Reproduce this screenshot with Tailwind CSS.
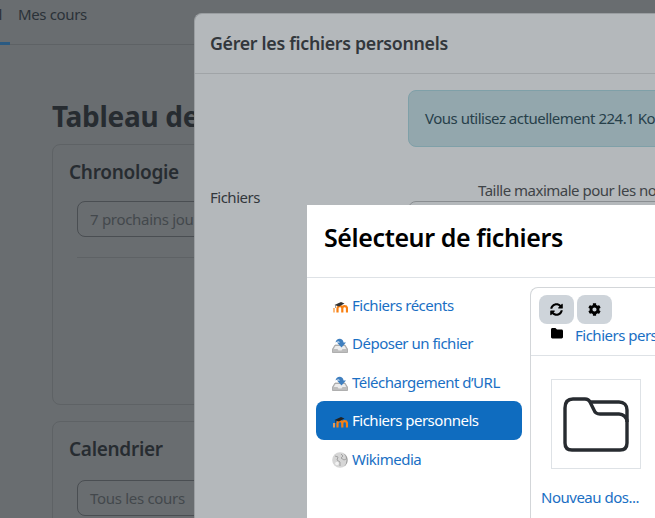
<!DOCTYPE html>
<html lang="fr">
<head>
<meta charset="UTF-8" />
<title>Gérer les fichiers personnels</title>
<script src="https://cdn.jsdelivr.net/npm/@tailwindcss/browser@4"></script>
</head>
<body class="relative h-[518px] w-[655px] overflow-hidden bg-[#696d70] font-['Noto_Sans',sans-serif] text-[15px] tracking-[-0.5px]">
  <!-- page behind the dialogs -->
  <nav class="flex h-[45px] border-b border-[#5e6265]">
    <div class="flex h-[45px] w-[10px] justify-end overflow-hidden border-b-[3px] border-[#2a5a82] pt-[2px] pr-[8px] leading-[24px] text-[#2b3238]">
      <span>Accueil</span>
    </div>
    <div class="pl-2 pt-[2px] leading-[24px] tracking-[-0.35px] text-[#2b3238]">Mes cours</div>
  </nav>
  <main class="pl-[52px] pt-[52px]">
    <h1 class="h-[47px] text-[28px] leading-[38px] font-bold tracking-[-0.3px] text-[#272c31]">Tableau de bord</h1>
    <section class="h-[261px] w-[560px] rounded-lg border border-[#5e6265] px-4 pt-[13px]">
      <h2 class="text-[19px] leading-[28px] font-semibold tracking-[-0.3px] text-[#272c31]">Chronologie</h2>
      <div class="mt-[15px] ml-2 h-[36px] w-[200px] rounded-lg border border-[#4a4e52] px-3 leading-[34px] tracking-[-0.3px] text-[#43484c]">7 prochains jours</div>
      <div class="mt-5 ml-2 border-t border-[#5e6265]"></div>
    </section>
    <section class="mt-4 h-[200px] w-[560px] rounded-lg border border-[#5e6265] px-4 pt-[13px]">
      <h2 class="text-[19px] leading-[28px] font-semibold tracking-[-0.3px] text-[#272c31]">Calendrier</h2>
      <div class="mt-[17px] ml-2 h-[36px] w-[200px] rounded-lg border border-[#4a4e52] px-3 leading-[34px] tracking-[-0.3px] text-[#43484c]">Tous les cours</div>
    </section>
  </main>

  <!-- manage files dialog -->
  <div class="absolute top-[13px] left-[194px] h-[600px] w-[600px] rounded-tl-lg border-t border-l border-[#9a9ea1] bg-[#b4b8bb]">
    <div class="flex h-[60px] items-center border-b border-[#a0a4a7] pl-[15px]">
      <h5 class="text-[17.8px] font-semibold tracking-[-0.3px] text-[#32373c]">Gérer les fichiers personnels</h5>
    </div>
    <div class="flex">
      <div class="w-[213px] shrink-0 pt-[112px] pl-[15px] text-[#32373c]">Fichiers</div>
      <div class="shrink-0 pt-4">
        <div class="flex h-[57px] w-[400px] items-center rounded-lg border border-[#7fa0a8] bg-[#93a7ad] px-4 text-[#27404a]">Vous utilisez actuellement 224.1 Ko</div>
        <div class="mt-[32px] pl-[70px] leading-[22px] whitespace-nowrap text-[#3e4347]">Taille maximale pour les nouveaux fichiers</div>
        <div class="h-[40px] w-[400px] rounded-t-lg border border-[#8a8e91]"></div>
      </div>
    </div>
  </div>

  <!-- file picker -->
  <div class="absolute top-[205px] left-[307px] h-[400px] w-[500px] bg-white">
    <div class="flex h-[73px] items-center border-b border-[#dee2e6] pb-[7px] pl-[17px]">
      <h5 class="text-[25px] font-semibold tracking-[-0.4px] text-black">Sélecteur de fichiers</h5>
    </div>
    <div class="flex">
      <ul class="w-[223px] shrink-0 pt-[9px] pl-[9px] text-[#1a6fc4]">
        <li class="flex h-[38px] w-[206px] items-center gap-[4px] pl-4">
          <svg class="h-4 w-4 shrink-0" viewBox="0 0 16 16"><path d="M2 14.500V10" stroke="#fbb36e" stroke-width="1.800"/><path d="M5.500 14.500V10.500c0-1.500 1-2.300 2.500-2.300s2.300.8 2.300 2.300v4M10.300 10.500c0-1.500 1-2.300 2.300-2.300s2.400.8 2.400 2.300v4" fill="none" stroke="#f98012" stroke-width="2.200"/><path d="M2.500 7 9 4 12.500 5.500 7 8.500z" fill="#333"/><path d="M3.500 7v3" stroke="#777" stroke-width=".7"/></svg>
          <span class="-translate-y-[1px]">Fichiers récents</span>
        </li>
        <li class="flex h-[38px] w-[206px] items-center gap-[4px] pl-4">
          <svg class="h-4 w-4 shrink-0 translate-y-[1px]" viewBox="0 0 16 16"><path d="M3 8 .5 12v3.500h15V12L13 8z" fill="#bdbdbd" stroke="#8f8f8f" stroke-width=".6"/><path d="M1.800 12h3.700l1 1.500h3l1-1.500h3.700L12.500 9h-9z" fill="#ececec"/><path d="M3.500 5.500C4 2 8 .5 10.500 3c.6.6.9 1.400 1 2.500H14L9.500 10.500 5 5.500h3C7.500 4 5 4 3.500 5.500z" fill="#3f7fbf"/></svg>
          <span class="-translate-y-[1px]">Déposer un fichier</span>
        </li>
        <li class="flex h-[38px] w-[206px] items-center gap-[4px] pl-4">
          <svg class="h-4 w-4 shrink-0 translate-y-[1px]" viewBox="0 0 16 16"><path d="M3 8 .5 12v3.500h15V12L13 8z" fill="#bdbdbd" stroke="#8f8f8f" stroke-width=".6"/><path d="M1.800 12h3.700l1 1.500h3l1-1.500h3.700L12.500 9h-9z" fill="#ececec"/><path d="M3.500 5.500C4 2 8 .5 10.500 3c.6.6.9 1.400 1 2.500H14L9.500 10.500 5 5.500h3C7.500 4 5 4 3.500 5.500z" fill="#3f7fbf"/></svg>
          <span>Téléchargement d’URL</span>
        </li>
        <li class="flex h-[39px] w-[206px] items-center gap-[4px] rounded-lg bg-[#0f6cbf] pl-4 text-white">
          <svg class="h-4 w-4 shrink-0" viewBox="0 0 16 16"><path d="M2 14.500V10" stroke="#f9a050" stroke-width="1.800"/><path d="M5.500 14.500V10.500c0-1.500 1-2.300 2.500-2.300s2.300.8 2.300 2.300v4M10.300 10.500c0-1.500 1-2.300 2.300-2.300s2.400.8 2.400 2.300v4" fill="none" stroke="#f98012" stroke-width="2.200"/><path d="M2.500 7 9 4 12.500 5.500 7 8.500z" fill="#222"/><path d="M3.500 7v3" stroke="#333" stroke-width=".7"/></svg>
          <span>Fichiers personnels</span>
        </li>
        <li class="flex h-[38px] w-[206px] items-center gap-[4px] pl-4">
          <svg class="h-4 w-4 shrink-0 translate-y-[1px]" viewBox="0 0 16 16"><circle cx="8" cy="8" r="7.800" fill="#d6d6d6"/><path d="M3 4l3 1-1 3 3 2 0 4M9 2l2 2-2 2 3 2 2-1" fill="none" stroke="#a3a3a3" stroke-width="1"/><circle cx="5" cy="11.500" r="1.800" fill="#f2f2f2"/><path d="M11.500 1.500A7.500 7.500 0 0 1 12 14.500 9 9 0 0 0 11.500 1.500z" fill="#9c9c9c"/></svg>
          <span>Wikimedia</span>
        </li>
      </ul>
      <div class="mt-[9px] h-[300px] w-[300px] shrink-0 rounded-tl-lg border-t border-l border-[#d3d6d9]">
        <div class="h-[68px] border-b border-[#dee2e6]">
          <div class="flex gap-[3px] pt-[7px] pl-2">
            <button class="flex h-[29px] w-[35px] items-center justify-center rounded-lg bg-[#ced4da]">
              <svg class="h-[13px] w-[13px]" viewBox="0 0 512 512"><path d="M370.700 133.300C339.500 104 298.900 88 255.800 88c-77.500.1-144.300 53.200-162.800 126.900-1.300 5.400-6.100 9.100-11.600 9.100H24.100c-7.500 0-13.200-6.800-11.800-14.200C33.900 94.900 134.800 8 256 8c66.400 0 126.800 26.100 171.300 68.700L463 41c15.100-15.100 41-4.400 41 17V192c0 13.300-10.700 24-24 24H345.900c-21.400 0-32.100-25.900-17-41zM32 296h134.100c21.400 0 32.100 25.900 17 41l-41.800 41.800c31.300 29.300 71.800 45.300 114.900 45.200 77.400-.1 144.300-53.100 162.800-126.900 1.300-5.400 6.100-9.100 11.600-9.100h57.300c7.500 0 13.200 6.800 11.800 14.200C478.100 417.100 377.200 504 256 504c-66.400 0-126.800-26.100-171.300-68.700L49 471c-15.100 15.100-41 4.400-41-17V320c0-13.300 10.700-24 24-24z"/></svg>
            </button>
            <button class="flex h-[29px] w-[35px] items-center justify-center rounded-lg bg-[#ced4da]">
              <svg class="h-[13px] w-[13px]" viewBox="0 0 512 512"><path d="M487.400 315.700l-42.600-24.600c4.300-23.200 4.300-47 0-70.200l42.600-24.600c4.900-2.800 7.100-8.600 5.500-14-11.100-35.600-30-67.800-54.700-94.600-3.800-4.100-10-5.100-14.800-2.300L380.800 110c-17.900-15.400-38.500-27.300-60.800-35.100V25.800c0-5.600-3.900-10.500-9.400-11.700-36.700-8.200-74.300-7.800-109.200 0-5.500 1.200-9.400 6.100-9.400 11.700V75c-22.200 7.900-42.800 19.800-60.800 35.100L88.700 85.500c-4.900-2.800-11-1.900-14.800 2.300-24.700 26.700-43.600 58.900-54.700 94.600-1.700 5.400.6 11.200 5.500 14L67.300 221c-4.300 23.200-4.300 47 0 70.200l-42.600 24.600c-4.900 2.800-7.100 8.600-5.500 14 11.100 35.600 30 67.800 54.700 94.600 3.800 4.100 10 5.100 14.800 2.300l42.600-24.600c17.900 15.400 38.500 27.300 60.800 35.100v49.200c0 5.600 3.900 10.500 9.400 11.700 36.700 8.200 74.300 7.800 109.200 0 5.500-1.200 9.400-6.100 9.400-11.700v-49.200c22.200-7.900 42.800-19.800 60.800-35.100l42.600 24.600c4.900 2.800 11 1.900 14.800-2.300 24.700-26.700 43.600-58.900 54.700-94.600 1.500-5.500-.7-11.300-5.600-14.100zM256 336c-44.100 0-80-35.900-80-80s35.900-80 80-80 80 35.900 80 80-35.900 80-80 80z"/></svg>
            </button>
          </div>
          <div class="flex items-center gap-3 pl-5 leading-[22px] text-[#1a6fc4]">
            <svg class="h-[12px] w-[12px] shrink-0 -translate-y-[2px]" viewBox="0 0 12 12"><path d="M0 2.500C0 1.700.6 1 1.400 1h3L6 2.500h4.600c.8 0 1.400.7 1.400 1.500v6c0 .8-.6 1.400-1.400 1.400H1.400C.6 11.400 0 10.800 0 10z"/></svg>
            <span class="whitespace-nowrap">Fichiers personnels</span>
          </div>
        </div>
        <div class="w-[109px] pt-[23px] pl-[9px]">
          <div class="ml-[11px] flex h-[90px] w-[90px] items-center justify-center border border-[#dee2e6]">
            <svg class="h-[55px] w-[66px]" viewBox="0 0 66 55" fill="none" stroke="#272b30" stroke-width="3.400" stroke-linejoin="round"><path d="M2 11C2 5 5 2 10 2h12c3 0 4 1 5 3l4 8c1 3 3 4 6 4h19c4 0 8 3 8 8"/><path d="M27 5h29c5 0 8 3 8 8v33c0 5-3 7-7 7H9c-4 0-7-2-7-7V11"/></svg>
          </div>
          <div class="mt-[17px] text-center whitespace-nowrap text-[#1a6fc4]">Nouveau dos...</div>
        </div>
      </div>
    </div>
  </div>
</body>
</html>
